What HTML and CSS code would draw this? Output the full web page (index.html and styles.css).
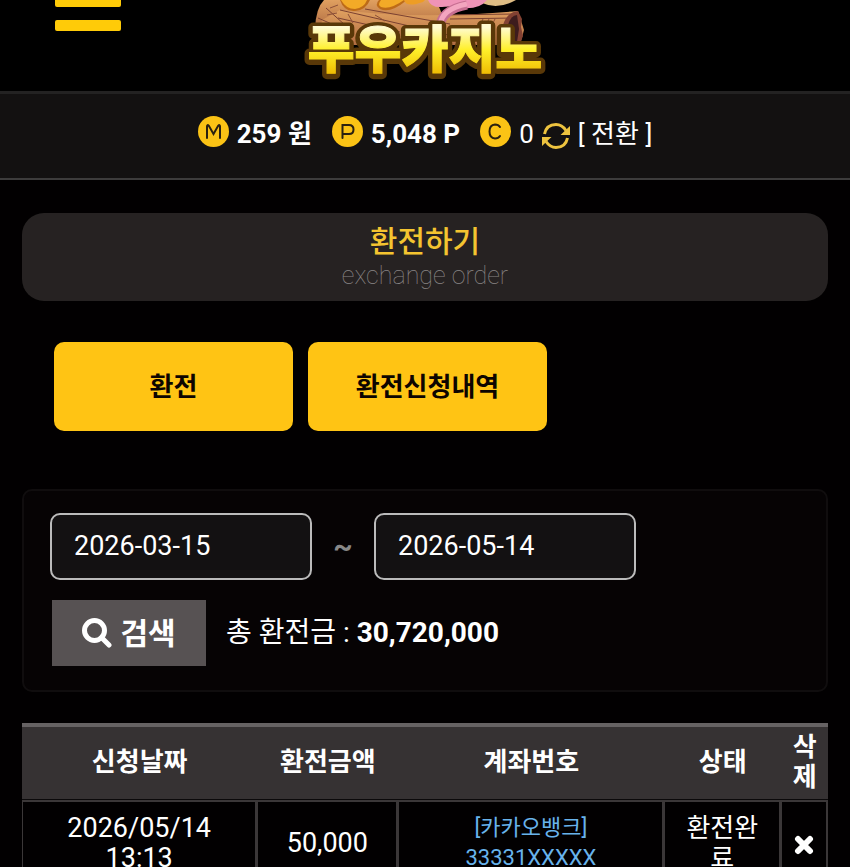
FILE: index.html
```html
<!DOCTYPE html>
<html lang="ko">
<head>
  <meta charset="UTF-8">
  <meta name="viewport" content="width=device-width, initial-scale=1">
  <title>환전하기</title>
  <link rel="stylesheet" href="styles.css">
</head>
<body>
  <header class="header">
    <button type="button" class="btn-menu" aria-label="메뉴">
      <svg width="66" height="31" viewBox="0 0 66 31">
        <rect x="0" y="-4" width="66" height="11" rx="2"/>
        <rect x="0" y="20" width="66" height="11" rx="2"/>
      </svg>
    </button>
    <a href="#" class="logo">
      <svg width="250" height="91" viewBox="300 0 250 91">
        <defs>
          <linearGradient id="gold" x1="0" y1="0" x2="0" y2="1">
            <stop offset="0.25" stop-color="#fffbd0"/>
            <stop offset="0.55" stop-color="#fff02a"/>
            <stop offset="0.9" stop-color="#eeb800"/>
          </linearGradient>
          <linearGradient id="wood" x1="0" y1="0" x2="0" y2="1">
            <stop offset="0" stop-color="#e0a060"/>
            <stop offset="1" stop-color="#b06d42"/>
          </linearGradient>
        </defs>
        <!-- 통나무 -->
        <path d="M324 0H436L448 28H315Q316 8 324 0Z" fill="url(#wood)"/>
        <path d="M340 10Q420 20 518 11L524 30 520 45H318L322 20Z" fill="url(#wood)"/>
        <path d="M340 10L470 40M338 18L400 32M440 15L516 14M450 19L514 18M326 8L345 25M318 18L334 25M365 9L450 24" stroke="#7b4131" stroke-width="1" fill="none"/>
        <path d="M330 8l8-3M327 15l10-2M348 14l5 9M375 15l10 6M483 19l-3 6M489 19l-3 6M495 19l-3 6" stroke="#8d5038" fill="none"/>
        <path d="M503 25Q507 12 518 11L522 19 521 27 523 36 519 46H505Z" fill="#824132"/>
        <path d="M508 25Q511 15 517 15L519 29 517 42H508Z" fill="#3d1c1d"/>
        <path d="M432 0Q435 7 450 6L482 3Q498 10 516 0Z" fill="#dfbd85"/>
        <path d="M428 0Q431 8 442 7Q457 5 461 8Q479 10 487 0Z" fill="#ef93b7"/>
        <path d="M467 5Q440 10 440 28" stroke="#c66e91" stroke-width="9" fill="none"/>
        <path d="M467 4Q441 9 440 26" stroke="#f3a5bf" stroke-width="5" fill="none"/>
        <path d="M340 0Q344 12 355 11Q366 10 370 0Z" fill="#bd6b18"/>
        <path d="M341 0Q346 9 355 9Q364 8 367 0Z" fill="#f3aa27"/>
        <path d="M379 0Q374 5 380 9Q390 14 407 0Z" fill="#bd6b18"/>
        <path d="M381 0Q377 5 381 7Q390 10 404 0Z" fill="#f3aa27"/>
        <path d="M404 0Q406 8 423 2L425 0Z" fill="#ed9d25"/>
        <text class="logo-text logo-shadow" x="425" y="69">푸우카지노</text>
        <text class="logo-text logo-face" x="425" y="68">푸우카지노</text>
      </svg>
    </a>
  </header>

  <div class="info-bar">
    <div class="info">
      <svg class="coin" width="31" height="31" viewBox="0 0 31 31"><circle cx="15.500" cy="15.500" r="15.500"/><path d="M9 22V10.500Q9 8 11 10L15.500 18L20 10Q22 8 22 10.500V22"/></svg>
      <b>259 원</b>
    </div>
    <div class="info">
      <svg class="coin" width="31" height="31" viewBox="0 0 31 31"><circle cx="15.500" cy="15.500" r="15.500"/><path d="M10.500 22V9H17Q21.500 9 21.500 13.500T17 18H11"/></svg>
      <b>5,048 P</b>
    </div>
    <div class="info">
      <svg class="coin" width="31" height="31" viewBox="0 0 31 31"><circle cx="15.500" cy="15.500" r="15.500"/><path d="M20 11Q18.500 8.500 15 8.500Q9.500 9 9.500 15.500T15 22.500Q18.500 22.500 20 20"/></svg>
      <span>0</span>
      <a href="#" class="convert">
        <svg width="28" height="28" viewBox="0 0 28 28">
          <path d="M2.500 12Q4.500 2.500 14 2.500Q20 2.500 24 8.500M25.500 16Q23.500 25.500 14 25.500Q8 25.500 4 19.500" fill="none" stroke="#edc33f" stroke-width="3"/>
          <path d="M28 4V13H18.500ZM0 24V15H9.500Z" fill="#edc33f"/>
        </svg>
        <span>[ 전환 ]</span>
      </a>
    </div>
  </div>

  <main class="content">
    <div class="page-title">
      <h1>환전하기</h1>
      <p>exchange order</p>
    </div>

    <div class="tabs">
      <button type="button" class="btn-tab">환전</button>
      <button type="button" class="btn-tab">환전신청내역</button>
    </div>

    <form class="search-box">
      <div class="dates">
        <input type="text" class="date" value="2026-03-15" aria-label="시작일">
        <span class="tilde">~</span>
        <input type="text" class="date" value="2026-05-14" aria-label="종료일">
      </div>
      <div class="search-row">
        <button type="button" class="btn-search">
          <svg width="30" height="30" viewBox="0 0 30 30"><circle cx="12.500" cy="12.500" r="10"/><path d="M19.500 19.500L27 27"/></svg>
          <span>검색</span>
        </button>
        <p class="total">총 환전금 : <b>30,720,000</b></p>
      </div>
    </form>

    <table class="history">
      <colgroup>
        <col class="col-date">
        <col class="col-money">
        <col class="col-account">
        <col class="col-state">
        <col class="col-delete">
      </colgroup>
      <thead>
        <tr>
          <th>신청날짜</th>
          <th>환전금액</th>
          <th>계좌번호</th>
          <th>상태</th>
          <th>삭제</th>
        </tr>
      </thead>
      <tbody>
        <tr>
          <td>2026/05/14 13:13</td>
          <td>50,000</td>
          <td class="account">[카카오뱅크]<br>33331XXXXX</td>
          <td class="state">환전완료</td>
          <td class="delete">
            <button type="button" class="btn-delete" aria-label="삭제">
              <svg width="20" height="20" viewBox="0 0 20 20"><path d="M4 4L16 16M16 4L4 16"/></svg>
            </button>
          </td>
        </tr>
      </tbody>
    </table>
  </main>
</body>
</html>
```
FILE: styles.css
```css
* {
  box-sizing: border-box;
}

body {
  margin: 0;
  background-color: #020001;
  color: #fff;
  font-family: Roboto, "Noto Sans CJK KR", sans-serif;
  font-size: 26px;
  line-height: 30px;
}

button {
  border: none;
  padding: 0;
  font-family: inherit;
  font-size: 26px;
  cursor: pointer;
}

h1, p {
  margin: 0;
}

svg {
  display: block;
  flex: none;
}

/* 상단 */
.header {
  display: grid;
  grid-template-columns: 1fr auto 1fr;
  align-items: start;
  background-color: #000;
}

.btn-menu {
  justify-self: start;
  margin-left: 55px;
  background: none;
}

.btn-menu rect {
  fill: #ffcb08;
}

.logo-text {
  font-family: "Noto Sans CJK KR", sans-serif;
  font-size: 51px;
  font-weight: 900;
  text-anchor: middle;
}

.logo-shadow {
  fill: #593808;
  stroke: #593808;
  stroke-width: 10px;
  stroke-linejoin: round;
}

.logo-face {
  fill: url(#gold);
  stroke: url(#gold);
  stroke-width: 1px;
}

/* 보유 머니, 포인트 */
.info-bar {
  display: flex;
  justify-content: center;
  gap: 20px;
  padding: 21px 0 31px;
  background-color: #131111;
  border-top: 3px solid #232222;
  border-bottom: 2px solid #3d3c3c;
}

.info, .convert {
  display: flex;
  align-items: center;
  gap: 8px;
}

.info {
  height: 32px;
}

.info b, .info span {
  padding-top: 5px;
}

.convert {
  color: #fff;
  text-decoration: none;
}

.convert svg {
  margin-top: 10px;
}

.coin circle {
  fill: #fbc315;
}

.coin path {
  fill: none;
  stroke: #2b2110;
  stroke-width: 2px;
  stroke-linecap: round;
}

.content {
  padding: 33px 22px;
}

.page-title {
  padding: 13px 0 7px;
  border-radius: 22px;
  background-color: #262222;
  text-align: center;
}

.page-title h1 {
  color: #f4c430;
  font-size: 30px;
  font-weight: 500;
  line-height: 32px;
}

.page-title p {
  color: #8a8686;
  font-size: 25px;
  font-weight: 100;
  line-height: 36px;
}

.tabs {
  display: flex;
  gap: 15px;
  margin: 41px 32px 58px;
}

.btn-tab {
  width: 239px;
  height: 89px;
  padding-bottom: 5px;
  border-radius: 10px;
  background-color: #ffc414;
  color: #0d0500;
  font-weight: bold;
}

/* 기간 검색 */
.search-box {
  padding: 22px 26px 24px;
  border: 2px solid #100d0e;
  border-radius: 10px;
  background-color: #060304;
}

.dates, .search-row {
  display: flex;
  align-items: center;
}

.date {
  width: 262px;
  height: 67px;
  padding: 0 22px 2px;
  border: 2px solid #bbb;
  border-radius: 10px;
  background-color: #131112;
  color: #fff;
  font-family: inherit;
  font-size: 27px;
}

.tilde {
  width: 62px;
  color: #888;
  font-size: 30px;
  font-weight: bold;
  text-align: center;
}

.search-row {
  gap: 20px;
  margin: 20px 2px 0;
}

.btn-search {
  display: flex;
  align-items: center;
  justify-content: center;
  gap: 8px;
  width: 154px;
  height: 66px;
  background-color: #575253;
  color: #fff;
  font-size: 30px;
  font-weight: bold;
}

.btn-search svg {
  fill: none;
  stroke: #fff;
  stroke-width: 5px;
  stroke-linecap: round;
}

.btn-search span {
  padding-bottom: 5px;
}

.total {
  font-size: 28px;
}

/* 환전 신청 내역 */
.history {
  width: 100%;
  margin-top: 31px;
  table-layout: fixed;
  border-spacing: 0;
  text-align: center;
}

.col-date { width: 29.2%; }
.col-money { width: 17.5%; }
.col-account { width: 33%; }
.col-state { width: 14.5%; }
.col-delete { width: 5.8%; }

.history th {
  padding: 5px 0 7px;
  border-top: 4px solid #666263;
  border-bottom: 1px solid #0b090a;
  background-color: #363233;
}

.history td {
  padding: 11px 12px;
  border: solid #3b3738;
  border-width: 2px 2px 2px 1px;
  font-size: 27px;
}

.history .account {
  color: #68b3ec;
  font-size: 22px;
}

.history .state {
  font-size: 26px;
}

.history .delete {
  padding: 0;
}

.btn-delete {
  background: none;
  vertical-align: middle;
}

.btn-delete path {
  stroke: #fff;
  stroke-width: 6px;
  stroke-linecap: round;
}
```
